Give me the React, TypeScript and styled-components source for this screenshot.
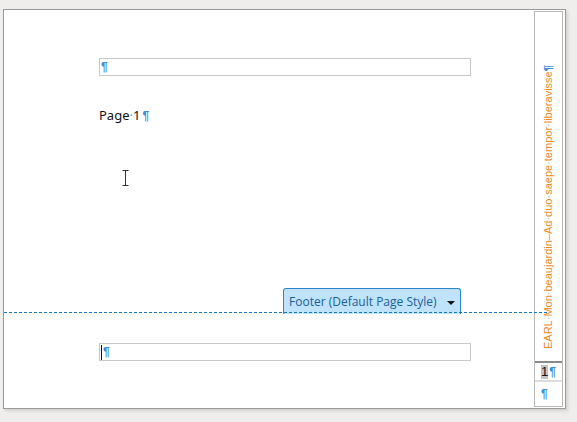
import React from "react";
import styled, { createGlobalStyle } from "styled-components";

const Global = createGlobalStyle`
  html, body { margin: 0; padding: 0; }
  body {
    background: #efeeec;
    width: 577px;
    height: 422px;
    overflow: hidden;
    font-family: "Liberation Sans", Arial, sans-serif;
  }
`;

const Canvas = styled.div`
  padding: 9px 0 0 3px;
`;

const Page = styled.div`
  position: relative;
  width: 561px;
  height: 398px;
  background: #ffffff;
  border: 1px solid #9a9a9a;
  box-shadow: 2px 2px 3px rgba(0, 0, 0, 0.12);
  display: grid;
  grid-template-columns: 530px 29px;
`;

const Main = styled.div`
  display: flex;
  flex-direction: column;
  padding-left: 95px;
`;

const FieldBox = styled.div<{ $top: number }>`
  margin-top: ${(p) => p.$top}px;
  width: 369px;
  height: 16px;
  border: 1px solid #c8c8c8;
  display: flex;
  align-items: center;
  padding-left: 1px;
  position: relative;
`;

const Pilcrow = styled.span<{ $size?: number }>`
  color: #3d8fdc;
  font-family: "Liberation Sans", Arial, sans-serif;
  font-size: ${(p) => p.$size ?? 12}px;
  font-weight: bold;
  line-height: 1;
`;

const Caret = styled.span`
  display: inline-block;
  width: 1px;
  height: 15px;
  background: #111;
  margin-right: 1px;
`;

const PageText = styled.div`
  margin-top: 31px;
  font-family: "Noto Sans", "Open Sans", sans-serif;
  font-size: 13px;
  line-height: 16px;
  color: #111;
  display: flex;
  align-items: baseline;
  gap: 2px;
`;

const Dot = styled.span`
  color: #7a9cbc;
`;

const Spacer = styled.div`
  flex: 1;
`;

const FooterArea = styled.div`
  display: flex;
  flex-direction: column;
`;

const TabRow = styled.div`
  padding-left: 184px;
  height: 26px;
`;

const FooterTab = styled.div`
  box-sizing: border-box;
  width: 178px;
  height: 26px;
  background: #bfe3fa;
  border: 1px solid #2c86c8;
  border-bottom: none;
  border-radius: 3px 3px 0 0;
  display: flex;
  align-items: center;
  padding: 0 0 0 5px;
  font-family: "Open Sans", "Noto Sans", sans-serif;
  font-size: 12px;
  color: #1d5f96;
  gap: 10px;
`;

const Triangle = styled.span`
  width: 0;
  height: 0;
  border-left: 4px solid transparent;
  border-right: 4px solid transparent;
  border-top: 4px solid #111;
  margin-top: 2px;
`;

const DashLine = styled.div`
  position: absolute;
  left: 0;
  top: 302px;
  width: 545px;
  height: 1px;
  background-image: repeating-linear-gradient(
    to right,
    #1b78b8 0 3px,
    transparent 3px 5px
  );
`;

const BottomGap = styled.div`
  height: 47px;
`;

const IBeam = styled.div`
  position: absolute;
  left: 118px;
  top: 160px;
  width: 7px;
  height: 16px;
  svg { display: block; }
`;

const Sidebar = styled.div`
  margin: 1px 0 1px 0;
  border: 1px solid #b8b8b8;
  display: flex;
  flex-direction: column;
  position: relative;
`;

const VerticalText = styled.div`
  flex: 1;
  writing-mode: vertical-rl;
  transform: rotate(180deg);
  font-family: "Liberation Sans", Arial, sans-serif;
  font-size: 11px;
  color: #ea8a1f;
  line-height: 26px;
  padding-top: 12px;
  white-space: nowrap;
  overflow: hidden;
`;

const VDot = styled.span`
  color: #9fb7cc;
`;

const Divider = styled.div<{ $dark?: boolean }>`
  height: 2px;
  background: ${(p) => (p.$dark ? "#8a8a8a" : "#dcdcdc")};
`;

const CellRow = styled.div<{ $h: number }>`
  height: ${(p) => p.$h}px;
  display: flex;
  align-items: center;
  padding-left: 6px;
  gap: 1px;
`;

const Num = styled.span`
  background: #c4c4c4;
  font-family: "Liberation Sans", Arial, sans-serif;
  font-size: 13px;
  line-height: 14px;
  color: #111;
  padding: 0;
`;

const vtext = "EARL Mon beaujardin–Ad duo saepe tempor liberavisse";

export default function App() {
  const parts = vtext.split(" ");
  return (
    <>
      <Global />
      <Canvas>
        <Page>
          <Main>
            <FieldBox $top={48}>
              <Pilcrow>¶</Pilcrow>
            </FieldBox>
            <PageText>
              <span>
                Page<Dot>·</Dot>1
              </span>
              <Pilcrow>¶</Pilcrow>
            </PageText>
            <Spacer />
            <FooterArea>
              <TabRow>
                <FooterTab>
                  Footer (Default Page Style)
                  <Triangle />
                </FooterTab>
              </TabRow>
              <FieldBox $top={29}>
                <Caret />
                <Pilcrow>¶</Pilcrow>
              </FieldBox>
              <BottomGap />
            </FooterArea>
          </Main>
          <Sidebar>
            <VerticalText>
              {parts.map((w, i) => (
                <React.Fragment key={i}>
                  {w}
                  {i < parts.length - 1 ? <VDot>·</VDot> : null}
                </React.Fragment>
              ))}
              <Pilcrow $size={11}>¶</Pilcrow>
            </VerticalText>
            <Divider $dark />
            <CellRow $h={17}>
              <Num>1</Num>
              <Pilcrow>¶</Pilcrow>
            </CellRow>
            <Divider />
            <CellRow $h={24}>
              <Pilcrow>¶</Pilcrow>
            </CellRow>
          </Sidebar>
          <DashLine />
          <IBeam>
            <svg width="7" height="16" viewBox="0 0 7 16">
              <path d="M0.5 0.5h6M3.5 0.5v15M0.5 15.5h6" stroke="#333" strokeWidth="1" fill="none" />
            </svg>
          </IBeam>
        </Page>
      </Canvas>
    </>
  );
}
